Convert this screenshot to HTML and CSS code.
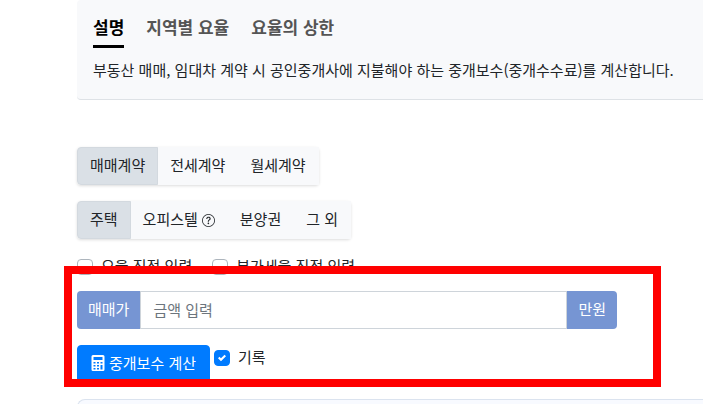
FILE: index.html
```html
<!DOCTYPE html>
<html lang="ko">
<head>
<meta charset="utf-8">
<meta name="viewport" content="width=device-width, initial-scale=1">
<title>중개보수 계산</title>
<link rel="stylesheet" href="styles.css">
</head>
<body>
<main class="page">
  <section class="intro">
    <nav class="tabs">
      <a class="tab active" href="#desc">설명</a>
      <a class="tab" href="#region">지역별 요율</a>
      <a class="tab" href="#limit">요율의 상한</a>
    </nav>
    <p class="intro-text" id="desc">부동산 매매, 임대차 계약 시 공인중개사에 지불해야 하는 중개보수(중개수수료)를 계산합니다.</p>
  </section>

  <form class="calculator">
    <div class="button-group">
      <button type="button" class="option active">매매계약</button>
      <button type="button" class="option">전세계약</button>
      <button type="button" class="option">월세계약</button>
    </div>
    <div class="button-group">
      <button type="button" class="option active">주택</button>
      <button type="button" class="option">오피스텔
        <svg class="help" viewBox="0 0 16 16" aria-hidden="true"><path d="M8 15A7 7 0 1 1 8 1a7 7 0 0 1 0 14zm0 1A8 8 0 1 0 8 0a8 8 0 0 0 0 16z"/><path d="M5.255 5.786a.237.237 0 0 0 .241.247h.825c.138 0 .248-.113.266-.25.09-.656.54-1.134 1.342-1.134.686 0 1.314.343 1.314 1.168 0 .635-.374.927-.965 1.371-.673.489-1.206 1.06-1.168 1.987l.003.217a.25.25 0 0 0 .25.246h.811a.25.25 0 0 0 .25-.25v-.105c0-.718.273-.927 1.01-1.486.609-.463 1.244-.977 1.244-2.056 0-1.511-1.276-2.241-2.673-2.241-1.267 0-2.655.59-2.75 2.286zm1.557 5.763c0 .533.425.927 1.01.927.609 0 1.028-.394 1.028-.927 0-.552-.42-.94-1.029-.94-.584 0-1.009.388-1.009.94z"/></svg>
      </button>
      <button type="button" class="option">분양권</button>
      <button type="button" class="option">그 외</button>
    </div>
    <div class="checks">
      <label class="check"><input type="checkbox">요율 직접 입력</label>
      <label class="check"><input type="checkbox">부가세율 직접 입력</label>
    </div>
    <div class="highlighted">
      <div class="input-group">
        <label class="addon" for="price">매매가</label>
        <input class="amount" id="price" type="text" placeholder="금액 입력">
        <span class="addon addon-end">만원</span>
      </div>
      <div class="actions">
        <button type="button" class="submit">
          <svg class="calc-icon" viewBox="0 0 14 16" aria-hidden="true"><path fill-rule="evenodd" d="M2 0h10a1.500 1.500 0 0 1 1.500 1.500v13a1.500 1.500 0 0 1-1.500 1.500H2a1.500 1.500 0 0 1-1.500-1.500v-13A1.500 1.500 0 0 1 2 0zM2.500 2v3h9V2zM2.500 7v1.600h2V7zM6 7v1.600h2V7zM9.500 7v1.600h2V7zM2.500 10v1.600h2V10zM6 10v1.600h2V10zM2.500 13v1.500h2V13zM6 13v1.500h2V13zM9.500 10v4.500h2V10z"/></svg>
          중개보수 계산
        </button>
        <label class="check"><input type="checkbox" checked>기록</label>
      </div>
    </div>
  </form>

  <section class="result" aria-label="계산 결과"></section>
</main>
</body>
</html>
```
FILE: styles.css
```css
* {
  box-sizing: border-box;
}

body {
  margin: 0;
  overflow: hidden;
  background: #fff;
  color: #212529;
  font-family: "Noto Sans CJK KR", sans-serif;
  font-size: 15px;
  line-height: 24px;
}

button,
input {
  font: inherit;
  color: inherit;
}

.page {
  padding-left: 77px;
}

.intro {
  padding: 15px 16px 17px;
  background: #f8f9fb;
  border-bottom: 1px solid #dee2e6;
  border-radius: 4px 0 0 4px;
}

.tabs {
  display: flex;
  gap: 22px;
  font-size: 17px;
  font-weight: 700;
}

.tab {
  padding-bottom: 6px;
  border-bottom: 3px solid transparent;
  color: #555;
  text-decoration: none;
}

.tab.active {
  border-color: #000;
  color: #000;
}

.intro-text {
  margin: 10px 0 0;
  white-space: nowrap;
}

.calculator {
  display: flex;
  flex-direction: column;
  align-items: flex-start;
  gap: 16px;
  margin-top: 47px;
}

.button-group {
  display: flex;
  border-radius: 4px;
  box-shadow: 0 1px 3px rgba(0, 0, 0, 0.14);
}

.option {
  display: flex;
  align-items: center;
  gap: 4px;
  padding: 5px 12px 7px;
  background: #f8f9fb;
  border: 1px solid #f8f9fb;
}

.option + .option {
  margin-left: -1px;
}

.option.active {
  position: relative;
  background: #dae0e6;
  border-color: #d3d9df;
  border-radius: 4px 0 0 4px;
}

.help {
  width: 13px;
  height: 13px;
  margin-top: 3px;
  fill: currentColor;
}

.checks {
  display: flex;
  gap: 20px;
  margin-top: -1px;
  margin-bottom: -3px;
}

.check {
  display: flex;
  align-items: center;
  gap: 8px;
}

.check input {
  appearance: none;
  width: 16px;
  height: 16px;
  margin: 2px 0 0;
  background: #fff;
  border: 1px solid #adb5bd;
  border-radius: 4px;
}

.check input:checked {
  border-color: #007bff;
  background: #007bff url("data:image/svg+xml,%3Csvg xmlns='http://www.w3.org/2000/svg' viewBox='0 0 8 8'%3E%3Cpath fill='%23fff' d='M6.564.75l-3.590 3.612-1.538-1.550L0 4.260l2.974 2.990L8 2.193z'/%3E%3C/svg%3E") center / 8px 8px no-repeat;
}

.highlighted {
  position: relative;
  width: 100%;
  max-width: 540px;
}

.highlighted::after {
  content: "";
  position: absolute;
  inset: -25px -44px -4px -13px;
  border: 8px solid #f00;
  pointer-events: none;
}

.input-group {
  display: flex;
}

.addon {
  padding: 6px 11px 8px;
  background: #7695d3;
  color: #fff;
  border-radius: 4px 0 0 4px;
}

.addon-end {
  border-radius: 0 4px 4px 0;
}

.amount {
  flex: 1;
  min-width: 0;
  padding: 6px 12px;
  background: #fff;
  border: 1px solid #ced4da;
}

.amount::placeholder {
  color: #6c757d;
  opacity: 1;
}

.actions {
  display: flex;
  align-items: flex-start;
  gap: 4px;
  margin-top: 16px;
}

.submit {
  display: flex;
  align-items: center;
  gap: 4px;
  padding: 5px 13px 7px;
  background: #007bff;
  border: 1px solid #007bff;
  border-radius: 4px;
  color: #fff;
}

.calc-icon {
  width: 14px;
  height: 16px;
  fill: currentColor;
}

.result {
  height: 80px;
  margin-top: 16px;
  background: #f8faff;
  border: 1px solid #dbe3ef;
  border-right: 0;
  border-radius: 8px 0 0 8px;
}
```
